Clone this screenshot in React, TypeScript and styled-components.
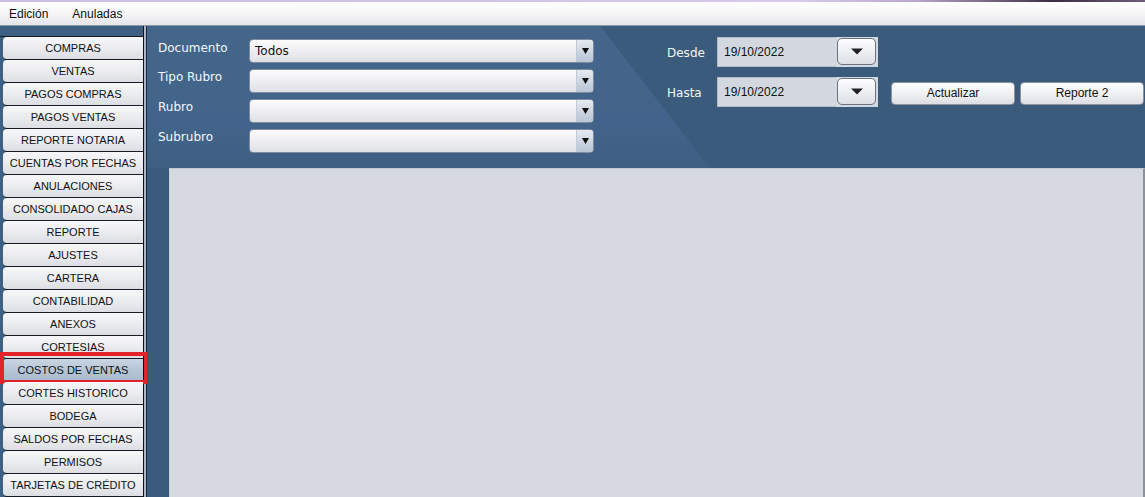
import React from 'react';
import styled, { createGlobalStyle } from 'styled-components';

const GlobalStyle = createGlobalStyle`
    html, body {
        margin: 0;
        padding: 0;
        overflow: hidden;
        background: #3d5f80;
    }
    * {
        box-sizing: border-box;
    }
`;

const uiFont = `"Liberation Sans", Arial, sans-serif`;
const labelFont = `"DejaVu Sans", "Liberation Sans", sans-serif`;

const Window = styled.div`
    width: 1145px;
    height: 497px;
    display: flex;
    flex-direction: column;
    font-family: ${uiFont};
`;

// thin leftover of the window title bar
const TitleStrip = styled.div`
    height: 2px;
    background: linear-gradient(90deg, #cbbde4 0%, #d6c9ec 70%, #b9a6cf 80%, #3a2e45 92%, #6e5e80 100%);
`;

const MenuBar = styled.div`
    height: 24px;
    display: flex;
    align-items: center;
    gap: 24px;
    padding-left: 9px;
    background: linear-gradient(180deg, #ffffff 0%, #f6f6f8 50%, #e4e5ea 100%);
    border-bottom: 1px solid #8d98a6;
`;

const MenuItem = styled.span`
    font-size: 12px;
    color: #111;
`;

const Body = styled.div`
    flex: 1;
    display: flex;
    min-height: 0;
`;

const Sidebar = styled.div`
    width: 144px;
    flex-shrink: 0;
    background: #3e6083;
    border-right: 1px solid #0c1218;
    padding-top: 10px;
    display: flex;
    flex-direction: column;
`;

const SideList = styled.div`
    border-top: 1px solid #141b22;
    display: flex;
    flex-direction: column;
`;

const SideButton = styled.div<{ $active?: boolean }>`
    position: relative;
    height: 23px;
    margin-left: 3px;
    display: flex;
    align-items: center;
    justify-content: center;
    font-size: 11px;
    color: #111;
    border-bottom: 1px solid #151b22;
    border-radius: 4px 0 0 4px;
    background: ${(p) =>
        p.$active
            ? 'linear-gradient(180deg, #c9d5e2 0%, #b4c4d6 55%, #a9bbd0 100%)'
            : 'linear-gradient(180deg, #f7f7f9 0%, #ebecef 50%, #dcdee3 100%)'};
`;

const Highlight = styled.div`
    position: absolute;
    left: -3px;
    right: -5px;
    top: -7px;
    bottom: -3px;
    border: 4px solid #e3232a;
    pointer-events: none;
`;

const Splitter = styled.div`
    flex-shrink: 0;
    width: 3px;
    background: #a9b7c8;
    border-right: 1px solid #1c2a38;
`;

const Main = styled.div`
    position: relative;
    flex: 1;
    display: flex;
    flex-direction: column;
    background: #3b5b7c;

    &::before {
        content: '';
        position: absolute;
        left: 0;
        top: 0;
        width: 570px;
        height: 142px;
        background: linear-gradient(180deg, #44668a 0%, #42648a 70%, #3e5f82 100%);
        clip-path: polygon(0 0, 453px 0, 563px 142px, 0 142px);
    }
`;

const FilterArea = styled.div`
    position: relative;
    height: 142px;
    display: flex;
    padding-left: 11px;
`;

const ComboGrid = styled.div`
    display: grid;
    grid-template-columns: 91px 345px;
    grid-auto-rows: 24px;
    row-gap: 6px;
    padding-top: 13px;
`;

const Label = styled.span<{ $shift?: number }>`
    font-family: ${labelFont};
    font-size: 12px;
    color: #f4f6fa;
    line-height: 16px;
    margin-top: ${(p) => p.$shift ?? 0}px;
`;

const Combo = styled.div`
    display: flex;
    border: 1px solid #7d8ca0;
    border-radius: 4px;
    overflow: hidden;
    background: linear-gradient(180deg, #fbfbfc 0%, #f0f0f3 45%, #dfe0e5 100%);
`;

const ComboText = styled.span`
    flex: 1;
    padding-left: 5px;
    display: flex;
    align-items: center;
    font-family: ${labelFont};
    font-size: 12px;
    color: #111;
`;

const ComboArrow = styled.div`
    width: 17px;
    display: flex;
    align-items: center;
    justify-content: center;
    border-left: 1px solid #c2cad6;
    background: linear-gradient(180deg, #e6ebf1 0%, #cdd6e2 50%, #b8c5d5 100%);
`;

const DateBlock = styled.div`
    margin-left: 73px;
    padding-top: 11px;
    display: flex;
    flex-direction: column;
    gap: 10px;
`;

const DateRow = styled.div`
    display: flex;
    align-items: center;
`;

const DateLabel = styled.span`
    width: 50px;
    font-family: ${labelFont};
    font-size: 12px;
    color: #f4f6fa;
    padding-top: 2px;
`;

const DateField = styled.div`
    width: 119px;
    height: 30px;
    display: flex;
    align-items: center;
    padding-left: 6px;
    font-size: 12px;
    color: #111;
    background: #d3d7df;
    border: 1px solid #b5bcc8;
    border-right: none;
`;

const DateButtonFrame = styled.div`
    width: 42px;
    height: 30px;
    padding: 1px 2px 2px 1px;
    background: #d3d7df;
`;

const DateButton = styled.div`
    width: 100%;
    height: 100%;
    border: 1px solid #6a737f;
    border-radius: 5px;
    display: flex;
    align-items: center;
    justify-content: center;
    background: linear-gradient(180deg, #fdfdfe 0%, #eeeff2 50%, #dcdee3 100%);
`;

const ActionButton = styled.div`
    width: 124px;
    height: 23px;
    display: flex;
    align-items: center;
    justify-content: center;
    font-size: 12px;
    color: #111;
    border: 1px solid #8a939f;
    border-radius: 4px;
    background: linear-gradient(180deg, #fdfdfe 0%, #f0f1f3 50%, #dcdee3 100%);
`;

const Actions = styled.div`
    display: flex;
    gap: 5px;
    margin-left: 13px;
    margin-top: 2px;
`;

const Content = styled.div`
    position: relative;
    flex: 1;
    margin-left: 22px;
    background: #d6d9e0;
    border-top: 1px solid #c3c9d3;
    border-left: 1px solid #c9ced8;
    border-right: 2px solid #8c9199;
`;

const SmallTriangle = () => (
    <svg width="7" height="8" viewBox="0 0 7 8">
        <path d="M0 1 L7 1 L3.5 7 Z" fill="#111" />
    </svg>
);

const WideTriangle = () => (
    <svg width="12" height="7" viewBox="0 0 12 7">
        <path d="M0 0.5 L12 0.5 L6 6.5 Z" fill="#222" />
    </svg>
);

const menu = [
    'COMPRAS',
    'VENTAS',
    'PAGOS COMPRAS',
    'PAGOS VENTAS',
    'REPORTE NOTARIA',
    'CUENTAS POR FECHAS',
    'ANULACIONES',
    'CONSOLIDADO CAJAS',
    'REPORTE',
    'AJUSTES',
    'CARTERA',
    'CONTABILIDAD',
    'ANEXOS',
    'CORTESIAS',
    'COSTOS DE VENTAS',
    'CORTES HISTORICO',
    'BODEGA',
    'SALDOS POR FECHAS',
    'PERMISOS',
    'TARJETAS DE CRÉDITO',
];

const combos = [
    { label: 'Documento', value: 'Todos', shift: 1 },
    { label: 'Tipo Rubro', value: '', shift: 0 },
    { label: 'Rubro', value: '', shift: 0 },
    { label: 'Subrubro', value: '', shift: 0 },
];

export default function App() {
    const selected = 'COSTOS DE VENTAS';

    return (
        <>
            <GlobalStyle />
            <Window>
                <TitleStrip />
                <MenuBar>
                    <MenuItem>Edición</MenuItem>
                    <MenuItem>Anuladas</MenuItem>
                </MenuBar>
                <Body>
                    <Sidebar>
                        <SideList>
                            {menu.map((item) => (
                                <SideButton key={item} $active={item === selected}>
                                    {item}
                                    {item === selected && <Highlight />}
                                </SideButton>
                            ))}
                        </SideList>
                    </Sidebar>
                    <Splitter />
                    <Main>
                        <FilterArea>
                            <ComboGrid>
                                {combos.map((c) => (
                                    <React.Fragment key={c.label}>
                                        <Label $shift={c.shift}>{c.label}</Label>
                                        <Combo>
                                            <ComboText>{c.value}</ComboText>
                                            <ComboArrow>
                                                <SmallTriangle />
                                            </ComboArrow>
                                        </Combo>
                                    </React.Fragment>
                                ))}
                            </ComboGrid>
                            <DateBlock>
                                <DateRow>
                                    <DateLabel>Desde</DateLabel>
                                    <DateField>19/10/2022</DateField>
                                    <DateButtonFrame>
                                        <DateButton>
                                            <WideTriangle />
                                        </DateButton>
                                    </DateButtonFrame>
                                </DateRow>
                                <DateRow>
                                    <DateLabel>Hasta</DateLabel>
                                    <DateField>19/10/2022</DateField>
                                    <DateButtonFrame>
                                        <DateButton>
                                            <WideTriangle />
                                        </DateButton>
                                    </DateButtonFrame>
                                    <Actions>
                                        <ActionButton>Actualizar</ActionButton>
                                        <ActionButton>Reporte 2</ActionButton>
                                    </Actions>
                                </DateRow>
                            </DateBlock>
                        </FilterArea>
                        <Content />
                    </Main>
                </Body>
            </Window>
        </>
    );
}
